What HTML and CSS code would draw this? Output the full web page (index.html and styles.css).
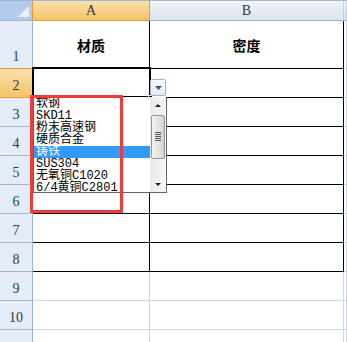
FILE: index.html
```html
<!DOCTYPE html>
<html lang="zh-CN">

<head>
  <meta charset="UTF-8" />
  <title>材质表</title>
  <link rel="stylesheet" href="styles.css">
</head>

<body>
  <div class="sheet">
    <div class="grid">
      <!-- 列标题 -->
      <div class="corner"><span class="tri"></span></div>
      <div class="colhead on">A</div>
      <div class="colhead">B</div>
      <div class="colhead last"></div>

      <!-- 第1行 -->
      <div class="rowhead">1</div>
      <div class="cell bk title">材质</div>
      <div class="cell bk title">密度</div>
      <div class="cell"></div>

      <div class="rowhead on">2</div>
      <div class="cell bk"></div>
      <div class="cell bk"></div>
      <div class="cell"></div>

      <div class="rowhead">3</div>
      <div class="cell bk"></div>
      <div class="cell bk"></div>
      <div class="cell"></div>

      <div class="rowhead">4</div>
      <div class="cell bk"></div>
      <div class="cell bk"></div>
      <div class="cell"></div>

      <div class="rowhead">5</div>
      <div class="cell bk"></div>
      <div class="cell bk"></div>
      <div class="cell"></div>

      <div class="rowhead">6</div>
      <div class="cell bk"></div>
      <div class="cell bk"></div>
      <div class="cell"></div>

      <div class="rowhead">7</div>
      <div class="cell bk"></div>
      <div class="cell bk"></div>
      <div class="cell"></div>

      <div class="rowhead">8</div>
      <div class="cell bk"></div>
      <div class="cell bk"></div>
      <div class="cell"></div>

      <div class="rowhead">9</div>
      <div class="cell"></div>
      <div class="cell"></div>
      <div class="cell"></div>

      <div class="rowhead">10</div>
      <div class="cell"></div>
      <div class="cell"></div>
      <div class="cell"></div>

      <div class="rowhead"></div>
      <div class="cell"></div>
      <div class="cell"></div>
      <div class="cell"></div>
    </div>

    <!-- 当前单元格 A2 -->
    <div class="active"><span class="handle"></span></div>

    <!-- 下拉按钮 -->
    <div class="dropbtn">
      <svg width="7" height="4" viewBox="0 0 7 4"><path d="M0 0H7L3.5 4Z" fill="#3b4f8f" /></svg>
    </div>

    <!-- 下拉列表 -->
    <div class="droplist">
      <ul class="items">
        <li>软钢</li>
        <li>SKD11</li>
        <li>粉末高速钢</li>
        <li>硬质合金</li>
        <li class="sel">铸铁</li>
        <li>SUS304</li>
        <li>无氧铜C1020</li>
        <li>6/4黄铜C2801</li>
      </ul>
      <div class="scroll">
        <div class="arrow up"></div>
        <div class="track">
          <div class="thumb"><span class="grip"></span></div>
        </div>
        <div class="arrow down"></div>
      </div>
    </div>

    <!-- 红框标注 -->
    <div class="mark"></div>
  </div>
</body>

</html>
```

FILE: styles.css
```css
* {
  padding: 0;
  margin: 0;
  list-style: none;
  box-sizing: border-box;
}

body {
  background: #fff;
  overflow: hidden;
  font-family: "Liberation Mono", "Noto Sans CJK SC", monospace;
}

.sheet {
  position: relative;
  width: 347px;
  height: 342px;
  overflow: hidden;
}

.grid {
  display: grid;
  grid-template-columns: 33px 117px 194px 1fr;
  grid-template-rows: 21px 48px repeat(10, 29px);
}

.corner {
  position: relative;
  background: #b3cbec;
  border-top: 1px solid #9eb6ce;
  border-bottom: 1px solid #9eb6ce;
  border-right: 1px solid #f29536;
}

.corner .tri {
  position: absolute;
  right: 3px;
  bottom: 3px;
  width: 0;
  height: 0;
  border-left: 11px solid transparent;
  border-bottom: 11px solid #e9f0fa;
}

.colhead {
  display: flex;
  align-items: center;
  justify-content: center;
  background: linear-gradient(#f2f5fa, #dbe3ef);
  border-top: 1px solid #9eb6ce;
  border-bottom: 1px solid #9eb6ce;
  border-right: 1px solid #c5d1e2;
  font-family: "Liberation Serif", serif;
  font-size: 14px;
  color: #27413e;
}

.colhead.on {
  background: linear-gradient(#fbe1ad, #f4c466);
  border-bottom: 1px solid #f29536;
  border-right: 1px solid #f29536;
}

.rowhead {
  display: flex;
  align-items: flex-end;
  justify-content: center;
  padding-bottom: 3px;
  background: #e4ecf7;
  border-right: 1px solid #9eb6ce;
  border-bottom: 1px solid #9eb6ce;
  font-family: "Liberation Serif", serif;
  font-size: 14px;
  color: #27413e;
}

.rowhead.on {
  background: linear-gradient(#fbe1ad, #f4c466);
  border-top: 1px solid #f29536;
  border-bottom: 1px solid #f29536;
  margin-top: -1px;
  border-right-color: #f29536;
}

.cell {
  border-right: 1px solid #d0d7e5;
  border-bottom: 1px solid #d0d7e5;
}

.cell.bk {
  border-color: #000;
}

.title {
  display: flex;
  align-items: center;
  justify-content: center;
  font-family: "Noto Sans CJK SC", sans-serif;
  font-weight: bold;
  font-size: 14px;
  color: #000;
}

.active {
  position: absolute;
  left: 32px;
  top: 67px;
  width: 119px;
  height: 31px;
  border: 2px solid #000;
}

.active .handle {
  position: absolute;
  right: -4px;
  bottom: -4px;
  width: 5px;
  height: 5px;
  background: #000;
  border: 1px solid #fff;
}

.dropbtn {
  position: absolute;
  left: 150px;
  top: 79px;
  width: 16px;
  height: 17px;
  display: flex;
  align-items: center;
  justify-content: center;
  border: 1px solid #9fb3cf;
  border-radius: 2px;
  background: linear-gradient(#fbfcfe, #e3eaf5);
}

.droplist {
  position: absolute;
  left: 33px;
  top: 97px;
  width: 134px;
  height: 96px;
  display: flex;
  background: #fff;
  border: 1px solid #646464;
  border-top: 0;
}

.items {
  flex: 1;
  padding-top: 1px;
  overflow: hidden;
  font-size: 12px;
  line-height: 12px;
  color: #000;
}

.items li {
  height: 12px;
  padding-left: 2px;
  white-space: nowrap;
}

.items li.sel {
  background: #3399ff;
  color: #fff;
}

.scroll {
  width: 16px;
  display: flex;
  flex-direction: column;
  background: linear-gradient(90deg, #eaeaea, #f6f6f6);
}

.arrow {
  height: 16px;
  display: flex;
  align-items: center;
  justify-content: center;
}

.arrow::after {
  content: "";
  width: 0;
  height: 0;
  border-left: 3px solid transparent;
  border-right: 3px solid transparent;
}

.arrow.up::after {
  border-bottom: 3px solid #222;
}

.arrow.down::after {
  border-top: 3px solid #222;
}

.track {
  flex: 1;
  padding-top: 2px;
}

.thumb {
  position: relative;
  margin: 0 1px;
  height: 44px;
  border: 1px solid #979797;
  border-radius: 2px;
  background: linear-gradient(90deg, #f4f4f4, #e2e2e2 60%, #cfcfcf);
}

.thumb .grip {
  position: absolute;
  left: 3px;
  top: 16px;
  width: 6px;
  height: 9px;
  background: repeating-linear-gradient(#555 0 1px, transparent 1px 2px);
}

.mark {
  position: absolute;
  left: 30px;
  top: 95px;
  width: 93px;
  height: 118px;
  border: 3px solid #ef3b3b;
}
```
